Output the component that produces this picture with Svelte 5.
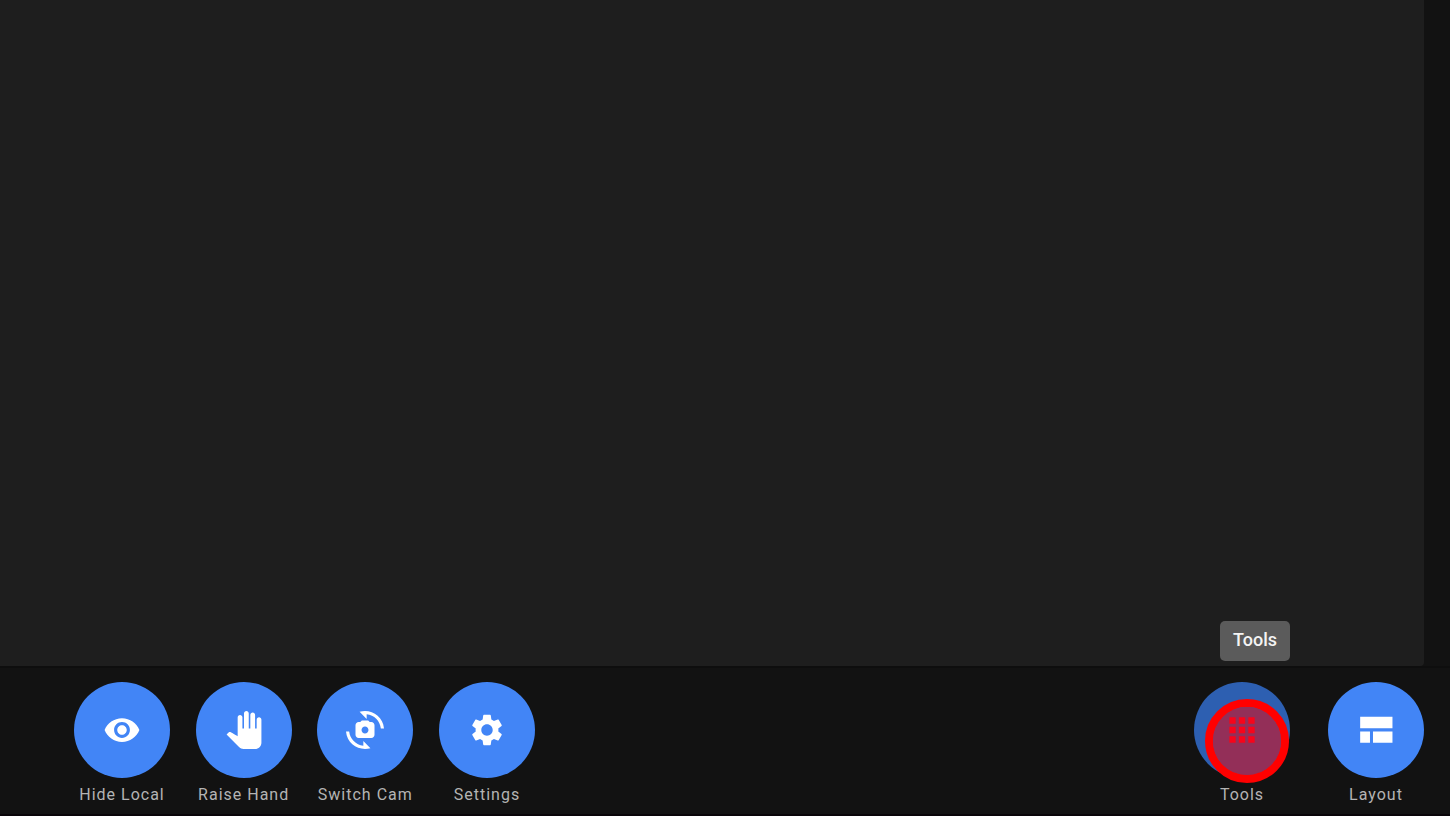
<script lang="ts">
  interface Control {
    id: string;
    label: string;
    paths: string[];
  }

  const mainControls: Control[] = [
    {
      id: 'local',
      label: 'Hide Local',
      paths: [
        'M12 4.5C7 4.5 2.73 7.61 1 12c1.73 4.39 6 7.5 11 7.5s9.27-3.11 11-7.5c-1.73-4.39-6-7.5-11-7.5zM12 17c-2.76 0-5-2.24-5-5s2.24-5 5-5 5 2.24 5 5-2.24 5-5 5zm0-8c-1.66 0-3 1.34-3 3s1.34 3 3 3 3-1.34 3-3-1.34-3-3-3z'
      ]
    },
    {
      id: 'hand',
      label: 'Raise Hand',
      paths: [
        'M23 5.5V20c0 2.2-1.8 4-4 4h-7.3c-1.08 0-2.1-.43-2.85-1.19L1 14.83s1.26-1.23 1.3-1.25c.22-.19.49-.29.79-.29.22 0 .42.06.6.16.04.01 4.31 2.46 4.31 2.46V4c0-.83.67-1.5 1.5-1.5S11 3.17 11 4v7h1V1.5c0-.83.67-1.5 1.5-1.5S15 .67 15 1.5V11h1V2.5c0-.83.67-1.5 1.5-1.5s1.5.67 1.5 1.5V11h1V5.5c0-.83.67-1.5 1.5-1.5s1.5.67 1.5 1.5z'
      ]
    },
    {
      id: 'camera',
      label: 'Switch Cam',
      paths: [
        'M16 7h-1l-1-1h-4L9 7H8c-1.1 0-2 .9-2 2v6c0 1.1.9 2 2 2h8c1.1 0 2-.9 2-2V9c0-1.1-.9-2-2-2zm-4 7.2c-1.2 0-2.2-1-2.2-2.2s1-2.2 2.2-2.2 2.2 1 2.2 2.2-1 2.2-2.2 2.2z',
        'M8.57.51l4.48 4.48V2.04c4.72.47 8.48 4.23 8.95 8.95h2C23.34 3.02 15.49-1.59 8.57.51z',
        'M10.95 21.96C6.23 21.49 2.47 17.73 2 13.01H0c.66 7.97 8.51 12.58 15.43 10.48l-4.48-4.48v2.95z'
      ]
    },
    {
      id: 'settings',
      label: 'Settings',
      paths: [
        'M19.14 12.94c.04-.3.06-.61.06-.94 0-.32-.02-.64-.07-.94l2.03-1.58c.18-.14.23-.41.12-.61l-1.92-3.32c-.12-.22-.37-.29-.59-.22l-2.39.96c-.5-.38-1.03-.7-1.62-.94l-.36-2.54c-.04-.24-.24-.41-.48-.41h-3.84c-.24 0-.43.17-.47.41l-.36 2.54c-.59.24-1.13.57-1.62.94l-2.39-.96c-.22-.08-.47 0-.59.22L2.74 8.87c-.12.21-.08.47.12.61l2.03 1.58c-.05.3-.09.63-.09.94s.02.64.07.94l-2.03 1.58c-.18.14-.23.41-.12.61l1.92 3.32c.12.22.37.29.59.22l2.39-.96c.5.38 1.03.7 1.62.94l.36 2.54c.05.24.24.41.48.41h3.84c.24 0 .44-.17.47-.41l.36-2.54c.59-.24 1.13-.56 1.62-.94l2.39.96c.22.08.47 0 .59-.22l1.92-3.32c.12-.22.07-.47-.12-.61l-2.01-1.58zM12 15.6c-1.98 0-3.6-1.62-3.6-3.6s1.62-3.6 3.6-3.6 3.6 1.62 3.6 3.6-1.62 3.6-3.6 3.6z'
      ]
    }
  ];

  const sideControls: Control[] = [
    {
      id: 'tools',
      label: 'Tools',
      paths: [
        'M4 8h4V4H4v4zm6 12h4v-4h-4v4zm-6 0h4v-4H4v4zm0-6h4v-4H4v4zm6 0h4v-4h-4v4zm6-10v4h4V4h-4zm-6 4h4V4h-4v4zm6 6h4v-4h-4v4zm0 6h4v-4h-4v4z'
      ]
    },
    {
      id: 'layout',
      label: 'Layout',
      paths: ['M2 3.7h20.4v7.2H2zM2 12.9h6.2v7.2H2zM10.1 12.9h12.3v7.2H10.1z']
    }
  ];

  let hovered = $state('tools');
</script>

{#snippet control(item: Control)}
  <div class="control">
    <button
      id={item.id}
      class="round"
      class:active={hovered === item.id}
      aria-labelledby="{item.id}-label"
      onmouseenter={() => (hovered = item.id)}
    >
      <svg viewBox="0 0 24 24" aria-hidden="true">
        {#each item.paths as d}
          <path {d} />
        {/each}
      </svg>
      {#if hovered === item.id}
        <span class="pointer"></span>
      {/if}
    </button>
    <label id="{item.id}-label" for={item.id}>{item.label}</label>
    {#if hovered === item.id}
      <div class="tooltip" role="tooltip">{item.label}</div>
    {/if}
  </div>
{/snippet}

<div class="call">
  <main class="stage"></main>

  <footer class="toolbar">
    <div class="group main">
      {#each mainControls as item (item.id)}
        {@render control(item)}
      {/each}
    </div>
    <div class="group side">
      {#each sideControls as item (item.id)}
        {@render control(item)}
      {/each}
    </div>
  </footer>
</div>

<style>
  :global(body) {
    margin: 0;
    background: #121212;
  }

  .call {
    display: flex;
    flex-direction: column;
    min-height: 100vh;
    background: #121212;
    font-family: Roboto, sans-serif;
  }

  .stage {
    flex: 1;
    margin-right: 26px;
    background: #1e1e1e;
    border-bottom-right-radius: 4px;
  }

  .toolbar {
    display: flex;
    justify-content: space-between;
    padding: 14px 26px 9px 74px;
    border-top: 2px solid #0e0e0e;
    border-bottom: 2px solid #090509;
  }

  .group {
    display: flex;
  }

  .main {
    width: 461px;
    justify-content: space-between;
  }

  .side {
    gap: 38px;
  }

  .control {
    position: relative;
    display: flex;
    flex-direction: column;
    align-items: center;
    gap: 7px;
    width: 96px;
  }

  .round {
    position: relative;
    display: flex;
    align-items: center;
    justify-content: center;
    width: 96px;
    height: 96px;
    padding: 0;
    border: none;
    border-radius: 50%;
    background: #4285f6;
    color: #fff;
    cursor: pointer;
  }

  .round svg {
    position: relative;
    z-index: 1;
    width: 38px;
    height: 38px;
    fill: currentColor;
  }

  .round.active {
    background: #2d5fb1;
    color: #f8041a;
  }

  label {
    color: #b4b4b4;
    font-size: 16px;
    line-height: 20px;
    letter-spacing: 1px;
    white-space: nowrap;
  }

  .pointer {
    position: absolute;
    top: 17px;
    left: 11px;
    box-sizing: border-box;
    width: 84px;
    height: 84px;
    border: 8px solid #f00;
    border-radius: 50%;
    background: rgba(250, 0, 0, 0.5);
    background-clip: padding-box;
    pointer-events: none;
  }

  .tooltip {
    position: absolute;
    right: 0;
    bottom: 144px;
    box-sizing: border-box;
    height: 40px;
    padding: 0 13px;
    border-radius: 5px;
    background: #5b5b5b;
    color: #f4f4f4;
    font-size: 18px;
    font-weight: 500;
    line-height: 38px;
  }
</style>
